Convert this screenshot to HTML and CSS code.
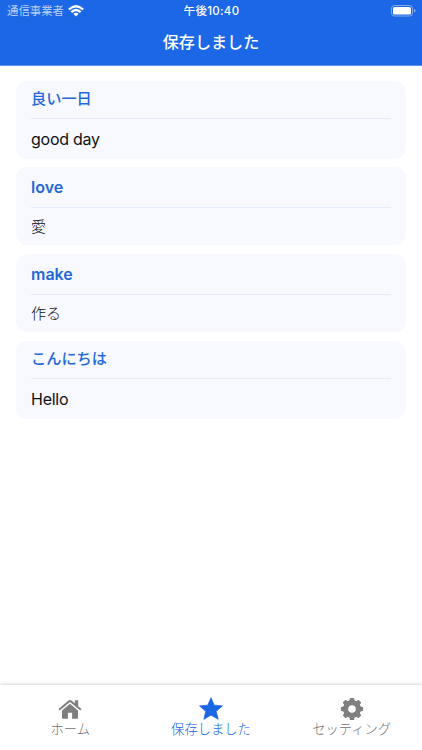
FILE: index.html
```html
<!DOCTYPE html>
<html lang="ja">
<head>
<meta charset="utf-8">
<title>保存しました</title>
<link rel="stylesheet" href="styles.css">
</head>
<body>
<header class="header">
  <div class="status">
    <div class="carrier"><span>通信事業者</span>
      <svg class="wifi" viewBox="0 0 16 12"><g fill="none" stroke="#fff" stroke-width="2.3"><path d="M.8 4.5Q8-2 15.200 4.500"/><path d="M3.300 7.200Q8 2.900 12.700 7.200"/></g><path fill="#fff" d="M5.400 8.800Q8 6.700 10.600 8.800L8 11.500Z"/></svg>
    </div>
    <time class="time">午後10:40</time>
    <svg class="battery" viewBox="0 0 25 12"><rect x=".5" y=".5" width="21" height="10.5" rx="3" fill="none" stroke="#fff" stroke-opacity=".45"/><rect x="2" y="2" width="18" height="7.5" rx="1.6" fill="#fff"/><path d="M23 4q1.5.4 1.500 1.800T23 7.600z" fill="#fff" fill-opacity=".5"/></svg>
  </div>
  <h1 class="title">保存しました</h1>
</header>
<main class="cards">
  <article class="card"><h2 class="term term-ja">良い一日</h2><p class="meaning">good day</p></article>
  <article class="card"><h2 class="term">love</h2><p class="meaning meaning-ja">愛</p></article>
  <article class="card"><h2 class="term">make</h2><p class="meaning meaning-ja">作る</p></article>
  <article class="card"><h2 class="term term-ja">こんにちは</h2><p class="meaning">Hello</p></article>
</main>
<nav class="tabs">
  <a class="tab"><svg class="icon" viewBox="0 0 24 24"><path d="M12 6.800 4 13.500V21q0 .8.800.8H9.900v-6h4.200v6h5.100q.8 0 .8-.8v-7.500z"/><path d="M12 3q-.8 0-1.500.6L.5 12l1.200 1.400L12 4.900l10.300 8.500 1.200-1.400-3.300-2.800V3.300h-3.400v3L13.500 3.600Q12.800 3 12 3z"/></svg><span>ホーム</span></a>
  <a class="tab active"><svg class="icon" viewBox="0 0 24 24"><path stroke="currentColor" stroke-width=".8" stroke-linejoin="round" d="m12 .8 3.200 7.400 8.200.7-6.200 5.400 1.900 8-7.100-4.200-7.100 4.200 1.900-8L.6 8.900l8.200-.7z"/></svg><span>保存しました</span></a>
  <a class="tab"><svg class="icon" viewBox="0 0 24 24"><circle cx="12" cy="12" r="6.400" fill="none" stroke="currentColor" stroke-width="5.200"/><g><path id="tooth" d="M9.200 4.500 9.900 1.400q.1-.5.500-.5h3.200q.4 0 .5.500l.7 3.100z"/><use href="#tooth" transform="rotate(45 12 12)"/><use href="#tooth" transform="rotate(90 12 12)"/><use href="#tooth" transform="rotate(135 12 12)"/><use href="#tooth" transform="rotate(180 12 12)"/><use href="#tooth" transform="rotate(225 12 12)"/><use href="#tooth" transform="rotate(270 12 12)"/><use href="#tooth" transform="rotate(315 12 12)"/></g></svg><span>セッティング</span></a>
</nav>
</body>
</html>
```
FILE: styles.css
```css
* { box-sizing: border-box; }
body {
  margin: 0;
  height: 750px;
  display: flex;
  flex-direction: column;
  overflow: hidden;
  background: #fff;
  color: #101010;
  font-family: Inter, "Noto Sans CJK JP", sans-serif;
}
h1, h2, p { margin: 0; }
.header {
  height: 66px;
  flex: none;
  background: #1b67e6;
  border-bottom: 1px solid #5b92ec;
  color: #fff;
}
.status {
  height: 22px;
  padding: 0 6px 0 7px;
  display: grid;
  grid-template-columns: 1fr auto 1fr;
  align-items: center;
}
.carrier {
  display: flex;
  align-items: center;
  gap: 4px;
  color: #b8d0f8;
  font-size: 11.4px;
  line-height: 22px;
}
.wifi { width: 16px; height: 12px; }
.time { font-size: 11.500px; font-weight: 500; line-height: 22px; letter-spacing: .3px; }
.battery { width: 25px; height: 12px; justify-self: end; }
.title {
  height: 40px;
  line-height: 40px;
  font-size: 16.100px;
  font-weight: 500;
  text-align: center;
}
.cards {
  flex: 1;
  padding: 15px 16px 0;
  display: flex;
  flex-direction: column;
  gap: 8.400px;
}
.card {
  height: 78px;
  padding: 0 15px;
  border-radius: 11px;
  background: #f8f9ff;
}
.card:last-child { margin-top: .400px; }
.term {
  height: 41px;
  line-height: 40px;
  border-bottom: 1px solid #e4ebf8;
  color: #2468d8;
  font-size: 16px;
  font-weight: 600;
}
.term-ja { height: 38px; line-height: 36px; font-size: 15.200px; font-weight: 500; }
.meaning { line-height: 40px; font-size: 16px; letter-spacing: -.25px; }
.meaning-ja { line-height: 37px; font-size: 15px; font-weight: 300; letter-spacing: 0; }
.tabs {
  height: 65px;
  flex: none;
  display: grid;
  grid-template-columns: repeat(3, 1fr);
  box-shadow: 0 -1px 3px rgba(0, 0, 0, .16);
}
.tab {
  display: flex;
  flex-direction: column;
  align-items: center;
  padding: 12px 0 0;
  color: #7f7f7f;
  font-size: 13.300px;
  line-height: 16px;
}
.tab span { height: 16px; color: #707070; font-weight: 300; }
.active, .active span { color: #1b67e6; }
.tab.active span { color: #0f5fe6; }
.icon { width: 24px; height: 24px; fill: currentColor; }
```
